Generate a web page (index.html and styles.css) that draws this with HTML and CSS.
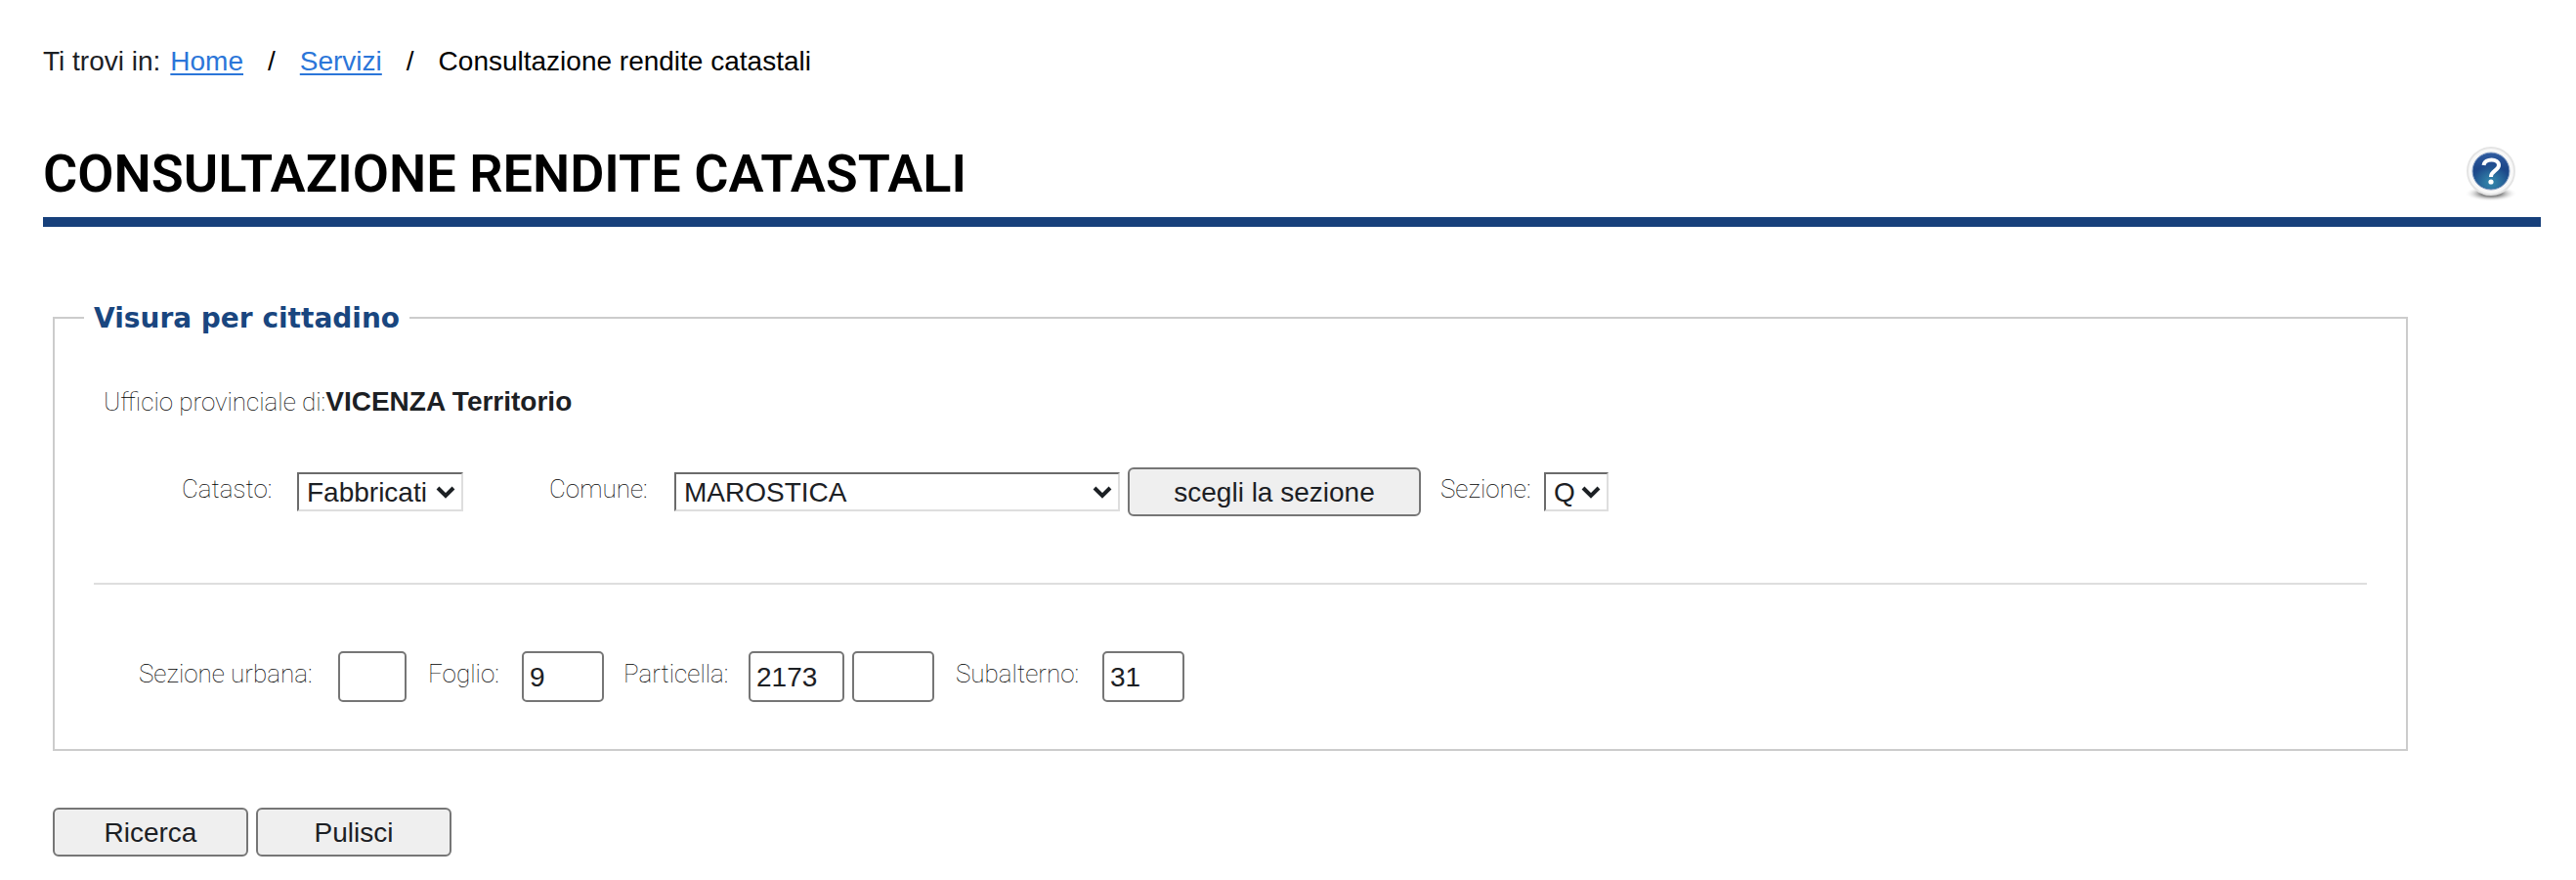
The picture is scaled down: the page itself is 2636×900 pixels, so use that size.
FILE: index.html
```html
<!DOCTYPE html>
<html lang="it">
<head>
<meta charset="utf-8">
<title>Consultazione rendite catastali</title>
<link rel="stylesheet" href="styles.css">
</head>
<body>
<main class="page">
  <nav class="breadcrumb" aria-label="Percorso">
    <span class="intro">Ti trovi in:</span>
    <a href="#">Home</a>
    <span class="sep">/</span>
    <a href="#">Servizi</a>
    <span class="sep">/</span>
    <span class="current">Consultazione rendite catastali</span>
  </nav>

  <header class="heading">
    <h1>CONSULTAZIONE RENDITE CATASTALI</h1>
    <a class="help" href="#" aria-label="Aiuto">
      <svg width="54" height="56" viewBox="0 0 54 56" aria-hidden="true">
        <defs>
          <linearGradient id="ball" x1="0" y1="0" x2="0" y2="1">
            <stop offset="0" stop-color="#2f5ba0"/>
            <stop offset="0.45" stop-color="#1c4688"/>
            <stop offset="1" stop-color="#245f96"/>
          </linearGradient>
          <radialGradient id="glow" cx="0.5" cy="0.8" r="0.5">
            <stop offset="0" stop-color="#3488ac"/>
            <stop offset="1" stop-color="#3488ac" stop-opacity="0"/>
          </radialGradient>
          <radialGradient id="shade">
            <stop offset="0.4" stop-color="#8c8c8c"/>
            <stop offset="1" stop-color="#ffffff" stop-opacity="0"/>
          </radialGradient>
        </defs>
        <ellipse cx="27" cy="48" rx="27" ry="8" fill="url(#shade)"/>
        <circle cx="27" cy="25" r="24" fill="#f8f8f8" stroke="#e4e4e4" stroke-width="2"/>
        <circle cx="27" cy="25" r="19" fill="url(#ball)" stroke="#8fa6c8" stroke-width="1"/>
        <circle cx="27" cy="25" r="18" fill="url(#glow)"/>
        <path d="M19.500 19C20.500 11.500 35 11.500 35 19C35 24.500 27 24.500 27 31" fill="none" stroke="#fff" stroke-width="4"/>
        <circle cx="27" cy="36" r="2.600" fill="#fff"/>
      </svg>
    </a>
  </header>

  <form class="search">
    <fieldset>
      <legend>Visura per cittadino</legend>
      <p class="office">Ufficio provinciale di:<strong>VICENZA Territorio</strong></p>

      <div class="row place">
        <label class="w-catasto" for="catasto">Catasto:</label>
        <span class="select s-catasto">
          <select id="catasto"><option>Fabbricati</option></select>
          <svg viewBox="0 0 20 14" aria-hidden="true"><path d="M2 3L10 11L18 3"/></svg>
        </span>
        <label class="w-comune" for="comune">Comune:</label>
        <span class="select s-comune">
          <select id="comune"><option>MAROSTICA</option></select>
          <svg viewBox="0 0 20 14" aria-hidden="true"><path d="M2 3L10 11L18 3"/></svg>
        </span>
        <button class="choose" type="button">scegli la sezione</button>
        <label class="w-sezione" for="sezione">Sezione:</label>
        <span class="select s-sezione">
          <select id="sezione"><option>Q</option></select>
          <svg viewBox="0 0 20 14" aria-hidden="true"><path d="M2 3L10 11L18 3"/></svg>
        </span>
      </div>

      <hr>

      <div class="row parcel">
        <label class="w-urbana" for="urbana">Sezione urbana:</label>
        <input class="i-small" id="urbana" type="text">
        <label class="w-foglio" for="foglio">Foglio:</label>
        <input class="i-medium" id="foglio" type="text" value="9">
        <label class="w-particella" for="particella">Particella:</label>
        <input class="i-large" id="particella" type="text" value="2173">
        <input class="i-medium second" type="text" aria-label="Particella, seconda parte">
        <label class="w-subalterno" for="subalterno">Subalterno:</label>
        <input class="i-medium" id="subalterno" type="text" value="31">
      </div>
    </fieldset>

    <div class="actions">
      <button type="submit">Ricerca</button>
      <button type="reset">Pulisci</button>
    </div>
  </form>
</main>
</body>
</html>
```
FILE: styles.css
```css
* {
  box-sizing: border-box;
}

body {
  margin: 0;
  background: #fff;
  color: #1c2024;
  font-family: "Liberation Sans", Arial, sans-serif;
  font-size: 28px;
  line-height: 42px;
}

.page {
  padding: 42px 36px 24px 44px;
}

.breadcrumb {
  display: flex;
  flex-wrap: wrap;
}

.breadcrumb a {
  color: #2b76d9;
  text-decoration-thickness: 2px;
  text-underline-offset: 3px;
}

.intro {
  margin-right: 10px;
}

.sep {
  margin: 0 25px;
}

.sep,
.current {
  color: #000;
}

.heading {
  display: flex;
  align-items: center;
  justify-content: space-between;
  margin-top: 62px;
  padding: 0 24px 12px 0;
  border-bottom: 10px solid #17407b;
}

h1 {
  margin: 0;
  color: #000;
  font-family: Roboto, sans-serif;
  font-size: 54px;
  font-weight: 600;
  line-height: 64px;
}

.help,
.help svg {
  display: block;
}

.search {
  margin: 72px 136px 0 10px;
}

fieldset {
  margin: 0;
  padding: 42px 40px 48px;
  border: 2px solid #ccc;
}

legend {
  margin-left: -10px;
  padding: 2px 10px 0;
  color: #19467f;
  font-family: "DejaVu Sans", Verdana, sans-serif;
  font-weight: 700;
  line-height: 40px;
}

.office,
label {
  color: #000;
  font-family: Roboto, sans-serif;
  font-size: 26px;
  font-weight: 100;
}

.office {
  margin: 0 0 46px;
  padding: 2px 0 0 10px;
}

.office strong {
  color: #1c2024;
  font-family: "Liberation Sans", Arial, sans-serif;
  font-size: 28px;
  font-weight: 700;
}

.row {
  display: flex;
  flex-wrap: wrap;
  align-items: center;
}

.place {
  padding-left: 90px;
}

.parcel {
  padding-left: 46px;
}

label {
  flex: none;
  padding-bottom: 6px;
}

.w-catasto {
  width: 118px;
}

.w-comune {
  width: 128px;
  margin-left: 88px;
}

.w-sezione {
  width: 106px;
  margin-left: 20px;
}

.w-urbana {
  width: 204px;
}

.w-foglio {
  width: 96px;
  margin-left: 22px;
}

.w-particella {
  width: 128px;
  margin-left: 20px;
}

.w-subalterno {
  width: 150px;
  margin-left: 22px;
}

.select {
  position: relative;
  height: 40px;
}

.select svg {
  position: absolute;
  top: 13px;
  right: 8px;
  width: 20px;
  height: 14px;
  fill: none;
  stroke: #1c2024;
  stroke-width: 4;
  pointer-events: none;
}

select {
  display: block;
  width: 100%;
  height: 40px;
  padding: 2px 8px 0;
  appearance: none;
  background: #fff;
  border: 2px solid;
  border-color: #6b6b6b #dedede #dedede #6b6b6b;
  border-radius: 0;
  color: inherit;
  font: inherit;
  line-height: 34px;
}

.s-catasto {
  width: 170px;
}

.s-comune {
  width: 456px;
}

.s-sezione {
  width: 66px;
}

button {
  width: 200px;
  height: 50px;
  padding: 2px 0 0;
  background: #efefef;
  border: 2px solid #767676;
  border-radius: 6px;
  color: inherit;
  font: inherit;
}

.choose {
  width: 300px;
  margin-left: 8px;
}

hr {
  height: 2px;
  margin: 68px 0;
  background: #dedede;
  border: 0;
}

input {
  height: 52px;
  padding: 2px 6px 0;
  background: #fff;
  border: 2px solid #767676;
  border-radius: 5px;
  color: inherit;
  font: inherit;
}

.i-small {
  width: 70px;
}

.i-medium {
  width: 84px;
}

.i-large {
  width: 98px;
}

.second {
  margin-left: 8px;
}

.actions {
  display: flex;
  gap: 8px;
  margin-top: 58px;
}
```
